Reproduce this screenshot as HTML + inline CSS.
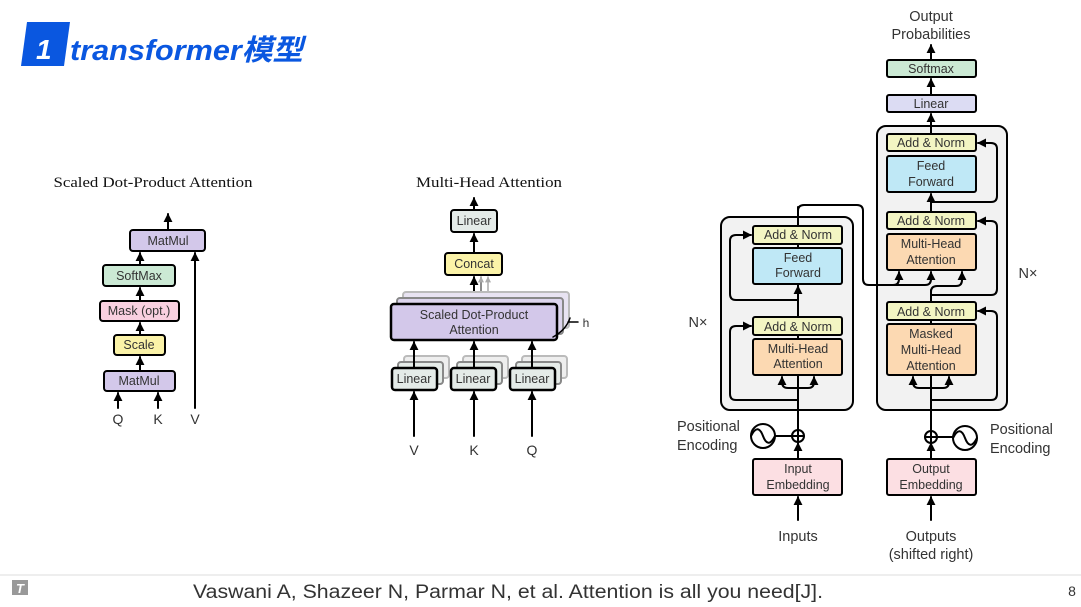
<!DOCTYPE html>
<html><head><meta charset="utf-8"><style>
html,body{margin:0;padding:0;background:#fff;}
body{width:1081px;height:602px;overflow:hidden;position:relative;font-family:"Liberation Sans",sans-serif;}
svg text{font-family:"Liberation Sans","Noto Sans CJK SC",sans-serif;}
</style></head><body>
<svg width="1081" height="602" viewBox="0 0 1081 602" xmlns="http://www.w3.org/2000/svg">
<defs>
<marker id="a" viewBox="0 0 10 10" refX="9" refY="5" markerWidth="4.5" markerHeight="4.5" orient="auto"><path d="M0 0L10 5L0 10z" fill="#000"/></marker>
<marker id="g" viewBox="0 0 10 10" refX="9" refY="5" markerWidth="4" markerHeight="4" orient="auto"><path d="M0 0L10 5L0 10z" fill="#aaa"/></marker>
</defs>
<!-- Title -->
<polygon points="27,22 70,22 64,66 21,66" fill="#0a57e0"/>
<text x="36" y="59" font-size="28" fill="#fff" font-style="italic" font-weight="bold">1</text>
<text x="70" y="60" font-size="29" fill="#0a57e0" font-style="italic" font-weight="bold" textLength="233" lengthAdjust="spacingAndGlyphs">transformer模型</text>

<g font-size="12.5" fill="#333" text-anchor="middle" stroke-linecap="round">
<!-- Scaled Dot-Product -->
<text x="153" y="187" font-size="15" fill="#111" textLength="199" lengthAdjust="spacingAndGlyphs" style="font-family:'Liberation Serif',serif">Scaled Dot-Product Attention</text>
<g stroke="#000" stroke-width="2" fill="none">
<line x1="168" y1="230" x2="168" y2="214" marker-end="url(#a)"/>
<line x1="140" y1="265" x2="140" y2="253" marker-end="url(#a)"/>
<line x1="140" y1="301" x2="140" y2="288" marker-end="url(#a)"/>
<line x1="140" y1="335" x2="140" y2="323" marker-end="url(#a)"/>
<line x1="140" y1="371" x2="140" y2="357" marker-end="url(#a)"/>
<line x1="118" y1="408" x2="118" y2="393" marker-end="url(#a)"/>
<line x1="158" y1="408" x2="158" y2="393" marker-end="url(#a)"/>
<line x1="195" y1="408" x2="195" y2="253" marker-end="url(#a)"/>
</g>
<g stroke="#000" stroke-width="2">
<rect x="130" y="230" width="75" height="21" rx="3" fill="#d3c8ea"/>
<rect x="103" y="265" width="72" height="21" rx="3" fill="#cbe9d4"/>
<rect x="100" y="301" width="79" height="20" rx="3" fill="#f9d0e0"/>
<rect x="114" y="335" width="51" height="20" rx="3" fill="#fbf3a8"/>
<rect x="104" y="371" width="71" height="20" rx="3" fill="#d3c8ea"/>
</g>
<text x="168" y="245">MatMul</text>
<text x="139" y="280">SoftMax</text>
<text x="139" y="315">Mask (opt.)</text>
<text x="139" y="349">Scale</text>
<text x="139" y="385">MatMul</text>
<text x="118" y="424" font-size="14">Q</text>
<text x="158" y="424" font-size="14">K</text>
<text x="195" y="424" font-size="14">V</text>

<!-- Multi-Head -->
<text x="489" y="187" font-size="15" fill="#111" textLength="146" lengthAdjust="spacingAndGlyphs" style="font-family:'Liberation Serif',serif">Multi-Head Attention</text>
<g stroke="#000" stroke-width="2" fill="none">
<line x1="474" y1="210" x2="474" y2="198" marker-end="url(#a)"/>
<line x1="474" y1="253" x2="474" y2="234" marker-end="url(#a)"/>
<line x1="474" y1="304" x2="474" y2="277" marker-end="url(#a)"/>
</g>
<line x1="481" y1="298" x2="481" y2="277" stroke="#666" stroke-width="1.5" marker-end="url(#g)"/>
<line x1="488" y1="292" x2="488" y2="277" stroke="#aaa" stroke-width="1.5" marker-end="url(#g)"/>
<g stroke="#bbb" stroke-width="2" fill="#e8e3f2">
<rect x="403" y="292" width="166" height="36" rx="3"/>
<rect x="397" y="298" width="166" height="36" rx="3" stroke="#888" fill="#ddd5ee"/>
</g>
<rect x="391" y="304" width="166" height="36" rx="3" fill="#d3c8ea" stroke="#000" stroke-width="2.5"/>
<text x="474" y="319">Scaled Dot-Product</text>
<text x="474" y="334">Attention</text>
<path d="M553 337 Q566 330 570 318 M568 322 L578 322" stroke="#000" stroke-width="1.5" fill="none"/>
<text x="586" y="327" font-size="12">h</text>
<g id="lin">
<rect x="404" y="356" width="45" height="22" rx="3" fill="#eee" stroke="#bbb" stroke-width="2"/>
<rect x="398" y="362" width="45" height="22" rx="3" fill="#e6ece9" stroke="#888" stroke-width="2"/>
<rect x="392" y="368" width="45" height="22" rx="3" fill="#e4ebe8" stroke="#000" stroke-width="2.5"/>
<text x="414" y="383">Linear</text>
</g>
<use href="#lin" x="59"/>
<use href="#lin" x="118"/>
<g stroke="#000" stroke-width="2" fill="none">
<line x1="414" y1="368" x2="414" y2="342" marker-end="url(#a)"/>
<line x1="474" y1="368" x2="474" y2="342" marker-end="url(#a)"/>
<line x1="532" y1="368" x2="532" y2="342" marker-end="url(#a)"/>
<line x1="414" y1="436" x2="414" y2="392" marker-end="url(#a)"/>
<line x1="474" y1="436" x2="474" y2="392" marker-end="url(#a)"/>
<line x1="532" y1="436" x2="532" y2="392" marker-end="url(#a)"/>
</g>
<rect x="451" y="210" width="46" height="22" rx="3" fill="#e4ebe8" stroke="#000" stroke-width="2"/>
<text x="474" y="225">Linear</text>
<rect x="445" y="253" width="57" height="22" rx="3" fill="#fbf3a8" stroke="#000" stroke-width="2"/>
<text x="474" y="268">Concat</text>
<text x="414" y="455" font-size="14">V</text>
<text x="474" y="455" font-size="14">K</text>
<text x="532" y="455" font-size="14">Q</text>

<!-- Transformer -->
<rect x="721" y="217" width="132" height="193" rx="9" fill="#f2f2f2" stroke="#000" stroke-width="2"/>
<rect x="877" y="126" width="130" height="284" rx="9" fill="#f2f2f2" stroke="#000" stroke-width="2"/>
<g stroke="#000" stroke-width="2" fill="none">
<line x1="798" y1="520" x2="798" y2="497" marker-end="url(#a)"/>
<line x1="798" y1="459" x2="798" y2="443" marker-end="url(#a)"/>
<line x1="798" y1="430" x2="798" y2="207"/>
<path d="M798 400 H736 Q730 400 730 394 V332 Q730 326 736 326 H751" marker-end="url(#a)"/>
<path d="M798 300 H736 Q730 300 730 294 V241 Q730 235 736 235 H751" marker-end="url(#a)"/>
<path d="M798 388 H788 Q782 388 782 382 V377" marker-end="url(#a)"/>
<path d="M798 388 H808 Q814 388 814 382 V377" marker-end="url(#a)"/>
<line x1="798" y1="300" x2="798" y2="286" marker-end="url(#a)"/>
<path d="M798 215 V211 Q798 205 804 205 H857 Q863 205 863 211 V279 Q863 285 869 285 H893 Q899 285 899 279 V272" marker-end="url(#a)"/>
<path d="M893 285 H925 Q931 285 931 279 V272" marker-end="url(#a)"/>
<line x1="931" y1="520" x2="931" y2="497" marker-end="url(#a)"/>
<line x1="931" y1="459" x2="931" y2="443" marker-end="url(#a)"/>
<line x1="931" y1="430" x2="931" y2="290"/>
<path d="M931 292 Q931 286 937 286 H956 Q962 286 962 280 V272" marker-end="url(#a)"/>
<path d="M931 388 H919 Q913 388 913 382 V377" marker-end="url(#a)"/>
<path d="M931 388 H943 Q949 388 949 382 V377" marker-end="url(#a)"/>
<path d="M931 400 H991 Q997 400 997 394 V317 Q997 311 991 311 H978" marker-end="url(#a)"/>
<path d="M931 295 H991 Q997 295 997 289 V227 Q997 221 991 221 H978" marker-end="url(#a)"/>
<path d="M931 202 H991 Q997 202 997 196 V149 Q997 143 991 143 H978" marker-end="url(#a)"/>
<line x1="931" y1="212" x2="931" y2="194" marker-end="url(#a)"/>
<line x1="931" y1="134" x2="931" y2="114" marker-end="url(#a)"/>
<line x1="931" y1="95" x2="931" y2="79" marker-end="url(#a)"/>
<line x1="931" y1="60" x2="931" y2="45" marker-end="url(#a)"/>
<line x1="775" y1="436" x2="792" y2="436"/>
<line x1="937" y1="437" x2="953" y2="437"/>
<circle cx="798" cy="436" r="6" fill="#fff"/>
<path d="M792 436H804M798 430V442"/>
<circle cx="931" cy="437" r="6" fill="#fff"/>
<path d="M925 437H937M931 431V443"/>
<circle cx="763" cy="436" r="12" fill="#fff"/>
<path d="M751 436 C756 426 760 428 763 436 C766 444 770 446 775 436"/>
<circle cx="965" cy="438" r="12" fill="#fff"/>
<path d="M953 438 C958 428 962 430 965 438 C968 446 972 448 977 438"/>
</g>
<g stroke="#000" stroke-width="2">
<rect x="753" y="226" width="89" height="18" rx="2" fill="#f3f5c3"/>
<rect x="753" y="248" width="89" height="36" rx="2" fill="#bfe8f6"/>
<rect x="753" y="317" width="89" height="18" rx="2" fill="#f3f5c3"/>
<rect x="753" y="339" width="89" height="36" rx="2" fill="#fcd9b2"/>
<rect x="887" y="134" width="89" height="17" rx="2" fill="#f3f5c3"/>
<rect x="887" y="156" width="89" height="36" rx="2" fill="#bfe8f6"/>
<rect x="887" y="212" width="89" height="17" rx="2" fill="#f3f5c3"/>
<rect x="887" y="234" width="89" height="36" rx="2" fill="#fcd9b2"/>
<rect x="887" y="302" width="89" height="18" rx="2" fill="#f3f5c3"/>
<rect x="887" y="324" width="89" height="51" rx="2" fill="#fcd9b2"/>
<rect x="887" y="95" width="89" height="17" rx="2" fill="#dcdcf3"/>
<rect x="887" y="60" width="89" height="17" rx="2" fill="#cbe9d4"/>
<rect x="753" y="459" width="89" height="36" rx="2" fill="#fcdfe3"/>
<rect x="887" y="459" width="89" height="36" rx="2" fill="#fcdfe3"/>
</g>
<text x="798" y="239">Add &amp; Norm</text>
<text x="798" y="262">Feed</text>
<text x="798" y="277">Forward</text>
<text x="798" y="331">Add &amp; Norm</text>
<text x="798" y="353">Multi-Head</text>
<text x="798" y="368">Attention</text>
<text x="931" y="147">Add &amp; Norm</text>
<text x="931" y="170">Feed</text>
<text x="931" y="186">Forward</text>
<text x="931" y="225">Add &amp; Norm</text>
<text x="931" y="248">Multi-Head</text>
<text x="931" y="264">Attention</text>
<text x="931" y="316">Add &amp; Norm</text>
<text x="931" y="338">Masked</text>
<text x="931" y="354">Multi-Head</text>
<text x="931" y="370">Attention</text>
<text x="931" y="108">Linear</text>
<text x="931" y="73">Softmax</text>
<text x="798" y="473">Input</text>
<text x="798" y="489">Embedding</text>
<text x="931" y="473">Output</text>
<text x="931" y="489">Embedding</text>
<g font-size="14.5">
<text x="931" y="21">Output</text>
<text x="931" y="39">Probabilities</text>
<text x="798" y="541">Inputs</text>
<text x="931" y="541">Outputs</text>
<text x="931" y="559">(shifted right)</text>
<text x="677" y="431" text-anchor="start">Positional</text>
<text x="677" y="450" text-anchor="start">Encoding</text>
<text x="990" y="434" text-anchor="start">Positional</text>
<text x="990" y="453" text-anchor="start">Encoding</text>
<text x="698" y="327">N×</text>
<text x="1028" y="278">N×</text>
</g>
</g>

<line x1="0" y1="575" x2="1081" y2="575" stroke="#eee" stroke-width="2"/>
<rect x="12" y="580" width="16" height="15" fill="#999"/>
<text x="16" y="593" font-size="13" fill="#fff" font-style="italic" font-weight="bold">T</text>
<text x="508" y="598" font-size="19" fill="#333" text-anchor="middle" textLength="630" lengthAdjust="spacingAndGlyphs">Vaswani A, Shazeer N, Parmar N, et al. Attention is all you need[J].</text>
<text x="1072" y="596" font-size="14" fill="#333" text-anchor="middle">8</text>
</svg>
</body></html>
